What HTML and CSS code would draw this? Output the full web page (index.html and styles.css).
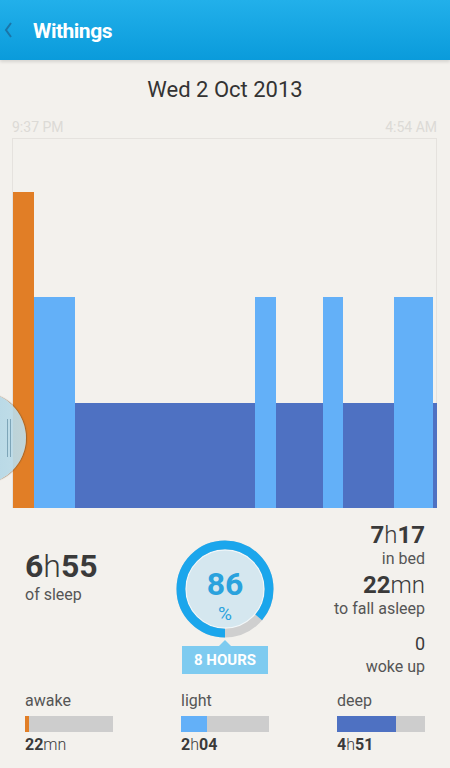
FILE: index.html
```html
<!DOCTYPE html>
<html lang="en">
<head>
    <meta charset="UTF-8">
    <meta name="viewport" content="width=device-width, initial-scale=1.0">
    <title>Withings - Sleep</title>
    <link rel="stylesheet" href="styles.css">
</head>
<body>

<!-- TOP BAR -->
<div class="topbar">
    <svg class="back" width="14" height="20" viewBox="0 0 14 20">
        <polyline points="10,3 5,10 10,17" fill="none" stroke="#1b75a8" stroke-width="2"/>
    </svg>
    <span class="title">Withings</span>
</div>

<div class="date">Wed 2 Oct 2013</div>

<div class="times">
    <span>9:37 PM</span>
    <span>4:54 AM</span>
</div>

<!-- SLEEP GRAPH -->
<div class="chart">
    <div class="bar awake" style="width:21px;height:316px"></div>
    <div class="bar light" style="width:41px;height:211px"></div>
    <div class="bar deep" style="width:180px;height:105px"></div>
    <div class="bar light" style="width:21px;height:211px"></div>
    <div class="bar deep" style="width:47px;height:105px"></div>
    <div class="bar light" style="width:20px;height:211px"></div>
    <div class="bar deep" style="width:51px;height:105px"></div>
    <div class="bar light" style="width:39px;height:211px"></div>
    <div class="bar deep" style="width:4px;height:105px"></div>

    <div class="handle"><span></span><span></span></div>
</div>

<!-- SUMMARY -->
<div class="summary">
    <div class="left">
        <div class="big"><b>6</b><i>h</i><b>55</b></div>
        <div class="label">of sleep</div>
    </div>

    <div class="middle">
        <div class="ring">
            <svg width="98" height="98" viewBox="0 0 100 100">
                <circle cx="50" cy="50" r="40" fill="#d5e7ef" stroke="#f2f7f9" stroke-width="1.5"/>
                <circle cx="50" cy="50" r="45" fill="none" stroke="#cfcfcf" stroke-width="9"/>
                <circle cx="50" cy="50" r="45" fill="none" stroke="#1ba6ec" stroke-width="9"
                        stroke-dasharray="243.2 400" transform="rotate(90 50 50)"/>
            </svg>
            <div class="pct">
                <div class="pct-num">86</div>
                <div class="pct-sign">%</div>
            </div>
        </div>
        <div class="goal">8 HOURS</div>
    </div>

    <div class="right">
        <div class="stat first">
            <div class="num"><b>7</b><i>h</i><b>17</b></div>
            <div class="label">in bed</div>
        </div>
        <div class="stat">
            <div class="num"><b>22</b><i>mn</i></div>
            <div class="label">to fall asleep</div>
        </div>
        <div class="stat last">
            <div class="num plain">0</div>
            <div class="label">woke up</div>
        </div>
    </div>
</div>

<!-- PHASES -->
<div class="phases">
    <div class="phase">
        <div class="phase-name">awake</div>
        <div class="track"><div class="fill awake" style="width:4px"></div></div>
        <div class="phase-time"><b>22</b><i>mn</i></div>
    </div>
    <div class="phase">
        <div class="phase-name">light</div>
        <div class="track"><div class="fill light" style="width:26px"></div></div>
        <div class="phase-time"><b>2</b><i>h</i><b>04</b></div>
    </div>
    <div class="phase">
        <div class="phase-name">deep</div>
        <div class="track"><div class="fill deep" style="width:59px"></div></div>
        <div class="phase-time"><b>4</b><i>h</i><b>51</b></div>
    </div>
</div>

</body>
</html>
```

FILE: styles.css
```css
body {
    margin: 0;
    font-family: Roboto, "Noto Sans", Arial, sans-serif;
    background-color: #f3f1ed;
    color: #333;
    overflow: hidden;
}
b {
    font-weight: 700;
}
i {
    font-style: normal;
    font-weight: 300;
}

/* top bar */
.topbar {
    height: 60px;
    display: flex;
    align-items: center;
    background: linear-gradient(#22b0ea, #0a9bdb);
    box-shadow: 0px 2px 3px rgba(0, 0, 0, 0.12);
}
.back {
    margin-left: 1px;
    margin-right: 18px;
}
.title {
    color: white;
    font-size: 21px;
    line-height: 24px;
    font-weight: 700;
    letter-spacing: -0.5px;
    padding-top: 1px;
}

.date {
    margin-top: 18px;
    text-align: center;
    font-size: 22px;
    line-height: 24px;
    color: #333;
}
.times {
    margin: 17px 13px 0 12px;
    display: flex;
    justify-content: space-between;
    font-size: 14px;
    line-height: 16px;
    color: #dcdad6;
}

/* graph */
.chart {
    position: relative;
    margin: 3px 13px 0 12px;
    height: 369px;
    border: 1px solid #e5e2de;
    border-bottom: none;
    display: flex;
    align-items: flex-end;
}
.bar {
    flex-shrink: 0;
}
.awake {
    background: #e17e26;
}
.light {
    background: #63b0f8;
}
.deep {
    background: #4e71c2;
}
.handle {
    position: absolute;
    left: -79px;
    top: 253px;
    width: 92px;
    height: 92px;
    border-radius: 50%;
    background: linear-gradient(90deg, rgba(160, 205, 225, 0.92), rgba(190, 220, 232, 0.92));
    box-shadow: 1px 0px 1px rgba(120, 80, 40, 0.6);
    display: flex;
    justify-content: flex-end;
    align-items: center;
    gap: 2px;
    padding-right: 15px;
    box-sizing: border-box;
}
.handle span {
    width: 1px;
    height: 38px;
    background: #7ea5b8;
}

/* summary */
.summary {
    margin-top: 13px;
    height: 163px;
    padding: 0 25px;
    display: grid;
    grid-template-columns: 1fr auto 1fr;
}
.left {
    padding-top: 26px;
}
.big {
    font-size: 32px;
    line-height: 38px;
    color: #3a3a3a;
}
.label {
    font-size: 16px;
    line-height: 19px;
    color: #555;
}

.middle {
    padding-top: 19px;
    display: flex;
    flex-direction: column;
    align-items: center;
}
.ring {
    position: relative;
    width: 98px;
    height: 98px;
}
.ring svg {
    display: block;
}
.pct {
    position: absolute;
    left: 0;
    right: 0;
    top: 25px;
    text-align: center;
    color: #2aa2dd;
}
.pct-num {
    font-size: 32px;
    line-height: 38px;
    font-weight: 700;
}
.pct-sign {
    font-size: 19px;
    line-height: 22px;
}
.goal {
    position: relative;
    margin-top: 8px;
    width: 86px;
    height: 28px;
    line-height: 28px;
    background: #7ecbf0;
    color: white;
    font-size: 15px;
    font-weight: 700;
    text-align: center;
}
.goal::before {
    content: "";
    position: absolute;
    left: 37px;
    top: -6px;
    border-left: 6px solid transparent;
    border-right: 6px solid transparent;
    border-bottom: 6px solid #7ecbf0;
}

.right {
    text-align: right;
}
.stat {
    margin-top: 3px;
}
.stat.first {
    margin-top: 0;
}
.stat.last {
    margin-top: 15px;
}
.num {
    font-size: 24px;
    line-height: 28px;
    color: #3a3a3a;
}
.num.plain {
    font-size: 18px;
    line-height: 22px;
    margin-bottom: 2px;
}

/* phases */
.phases {
    margin-top: 8px;
    padding: 0 25px;
    display: flex;
    justify-content: space-between;
}
.phase {
    width: 88px;
}
.phase-name {
    font-size: 16px;
    line-height: 18px;
    color: #555;
}
.track {
    margin-top: 6px;
    height: 16px;
    background: #cdcdcd;
}
.fill {
    height: 16px;
}
.phase-time {
    margin-top: 4px;
    font-size: 16px;
    line-height: 18px;
    color: #3a3a3a;
}
```
